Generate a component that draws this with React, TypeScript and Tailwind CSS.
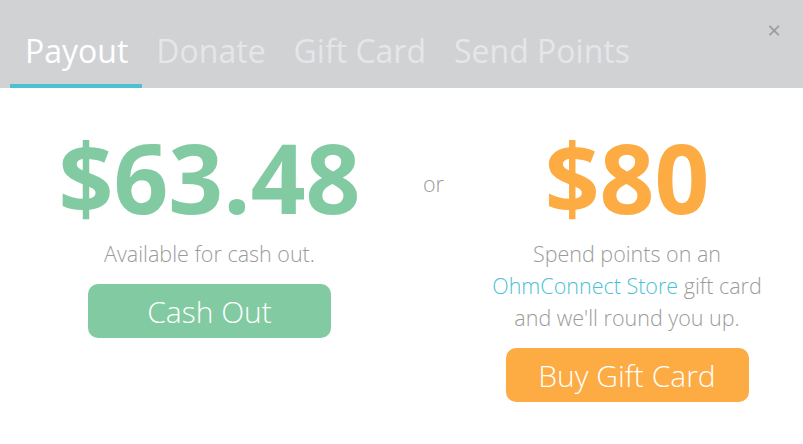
const tabs = ["Payout", "Donate", "Gift Card", "Send Points"];

export default function App() {
  return (
    <div
      className="h-[444px] w-[803px] overflow-hidden bg-white"
      style={{ fontFamily: '"Open Sans", sans-serif' }}
    >
      <div className="relative flex h-[88px] items-end bg-[#d1d2d4] pl-[10px]">
        {tabs.map((tab, i) => (
          <div
            key={tab}
            className={
              i === 0
                ? "border-b-4 border-[#4bc1d2] pl-[15px] pr-[14px] pb-[14px] text-[32px] leading-[38px] text-white"
                : "border-b-4 border-transparent px-[14px] pb-[14px] text-[32px] leading-[38px] text-[#e5e6e8]"
            }
          >
            {tab}
          </div>
        ))}
        <button className="absolute right-[22px] top-[18px] text-[24px] leading-none text-[#9a9b9d]">
          ×
        </button>
      </div>

      <div className="flex items-start pl-[29px] pt-[41px]">
        <div className="flex w-[361px] flex-col items-center">
          <div className="text-[96px] font-bold leading-[96px] text-[#82caa2]">
            $63.48
          </div>
          <p className="mt-[13px] text-[21.5px] font-light leading-[32px] text-[#9b9b9b]">
            Available for cash out.
          </p>
          <button className="mt-[14px] h-[54px] w-[243px] rounded-[10px] bg-[#82caa2] text-[30px] font-light text-white">
            Cash Out
          </button>
        </div>

        <div className="ml-[33px] mt-[39px] w-[22px] text-[21.5px] font-light text-[#9b9b9b]">
          or
        </div>

        <div className="ml-[32px] flex w-[300px] flex-col items-center">
          <div className="text-[96px] font-bold leading-[96px] text-[#fdab43]">
            $80
          </div>
          <p className="mt-[13px] text-center text-[21.5px] font-light leading-[32px] text-[#9b9b9b]">
            Spend points on an
            <br />
            <span className="text-[#4bc1d2]">OhmConnect Store</span> gift card
            <br />
            and we'll round you up.
          </p>
          <button className="mt-[14px] h-[54px] w-[243px] rounded-[10px] bg-[#fdab43] text-[30px] font-light text-white">
            Buy Gift Card
          </button>
        </div>
      </div>
    </div>
  );
}
